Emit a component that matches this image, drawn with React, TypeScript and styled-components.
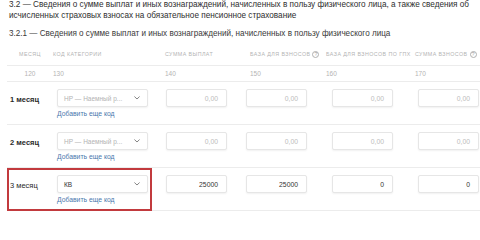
import React from "react";
import styled, { createGlobalStyle } from "styled-components";

const Global = createGlobalStyle`
  html, body { margin: 0; padding: 0; background: #fff; }
  body { width: 480px; height: 213px; overflow: hidden; font-family: "Liberation Sans", Arial, sans-serif; }
`;

const Page = styled.div`
  width: 480px;
  height: 213px;
  overflow: hidden;
  padding-left: 7px;
  box-sizing: border-box;
`;

const Title = styled.div`
  padding-left: 2px;
  font-size: 8.2px;
  line-height: 10.5px;
  color: #2e2e2e;
  font-weight: 500;
  white-space: nowrap;
`;

const SubTitle = styled.div`
  padding-left: 2px;
  margin-top: 7.5px;
  font-size: 8.15px;
  line-height: 10.5px;
  color: #3a3a3a;
  white-space: nowrap;
`;

const HeadGrid = styled.div<{ $h: number; $mt?: number }>`
  display: grid;
  grid-template-columns: 46px 112px 85px 76px 89px 1fr;
  align-items: center;
  height: ${(p) => p.$h}px;
  margin-top: ${(p) => p.$mt ?? 0}px;
  border-bottom: 1px solid #ececec;
  width: 480px;
`;

const HeadCell = styled.div<{ $center?: boolean }>`
  display: flex;
  align-items: center;
  gap: 2px;
  height: 8px;
  justify-content: ${(p) => (p.$center ? "center" : "flex-start")};
  font-size: 5.3px;
  line-height: 8px;
  letter-spacing: 0.45px;
  text-transform: uppercase;
  color: #b3b3b3;
  white-space: nowrap;
`;

const NumCell = styled.div<{ $center?: boolean }>`
  text-align: ${(p) => (p.$center ? "center" : "left")};
  font-size: 6.5px;
  color: #b4b4b4;
`;

const Help = styled.span`
  display: inline-flex;
  align-items: center;
  justify-content: center;
  width: 7px;
  height: 7px;
  border: 0.8px solid #b0b0b0;
  border-radius: 50%;
  font-size: 5px;
  letter-spacing: 0;
  line-height: 7px;
  color: #a0a0a0;
  box-sizing: border-box;
`;

const Row = styled.div`
  position: relative;
  display: grid;
  grid-template-columns: 50px 108px 80px 86px 86px 1fr;
  height: 42px;
  border-bottom: 1px solid #ececec;
  width: 480px;
  box-sizing: content-box;
`;

const MonthLabel = styled.div<{ $weight: number }>`
  padding: 0 0 0 3px;
  height: 18px;
  margin-top: 8px;
  display: flex;
  align-items: center;
  font-size: 7.5px;
  font-weight: ${(p) => p.$weight};
  color: #2a2a2a;
  white-space: nowrap;
`;

const CodeCell = styled.div`
  display: flex;
  flex-direction: column;
  padding-top: 7px;
`;

const Select = styled.div<{ $filled?: boolean }>`
  width: 91px;
  height: 18px;
  box-sizing: border-box;
  border: 1px solid #e6e6e6;
  border-radius: 2px;
  box-shadow: 0 1px 2px rgba(0, 0, 0, 0.06);
  background: #fff;
  display: flex;
  align-items: center;
  justify-content: space-between;
  padding: 0 7px 0 6px;
  font-size: 6.5px;
  color: ${(p) => (p.$filled ? "#333" : "#b3b3b3")};
  white-space: nowrap;
`;

const AddLink = styled.div`
  margin-top: 2px;
  font-size: 6.8px;
  line-height: 10px;
  color: #4a78ad;
  white-space: nowrap;
`;

const InputCell = styled.div`
  padding-top: 7px;
  padding-left: 1px;
`;

const Input = styled.div<{ $filled?: boolean }>`
  width: 61px;
  height: 18px;
  box-sizing: border-box;
  border: 1px solid #e6e6e6;
  border-radius: 2px;
  box-shadow: 0 1px 2px rgba(0, 0, 0, 0.06);
  background: #fff;
  display: flex;
  align-items: center;
  justify-content: flex-end;
  padding-right: 8px;
  font-size: 6.8px;
  color: ${(p) => (p.$filled ? "#333" : "#bcbcbc")};
`;

const Highlight = styled.div`
  position: absolute;
  left: 0;
  top: 0;
  width: 145px;
  height: 43px;
  border: 2px solid rgb(194, 58, 62);
  box-sizing: border-box;
  pointer-events: none;
`;

const Chevron = () => (
  <svg width="6" height="4" viewBox="0 0 6 4" fill="none">
    <path d="M0.7 0.8 L3 3 L5.3 0.8" stroke="#777" strokeWidth="0.9" strokeLinecap="round" strokeLinejoin="round" />
  </svg>
);

type RowData = {
  month: string;
  weight: number;
  code: string;
  filled: boolean;
  values: string[];
  highlight?: boolean;
};

const rows: RowData[] = [
  { month: "1 месяц", weight: 700, code: "НР — Наемный р...", filled: false, values: ["0,00", "0,00", "0,00", "0,00"] },
  { month: "2 месяц", weight: 600, code: "НР — Наемный р...", filled: false, values: ["0,00", "0,00", "0,00", "0,00"] },
  { month: "3 месяц", weight: 500, code: "КВ", filled: true, values: ["25000", "25000", "0", "0"], highlight: true },
];

export default function App() {
  return (
    <Page>
      <Global />
      <Title>
        3.2 — Сведения о сумме выплат и иных вознаграждений, начисленных в пользу физического лица, а также сведения об
        <br />
        исчисленных страховых взносах на обязательное пенсионное страхование
      </Title>
      <SubTitle>3.2.1 — Сведения о сумме выплат и иных вознаграждений, начисленных в пользу физического лица</SubTitle>
      <HeadGrid $h={22} $mt={4}>
        <HeadCell $center>Месяц</HeadCell>
        <HeadCell>Код категории</HeadCell>
        <HeadCell>Сумма выплат</HeadCell>
        <HeadCell>
          База для взносов <Help>?</Help>
        </HeadCell>
        <HeadCell>База для взносов по ГПХ</HeadCell>
        <HeadCell>
          Сумма взносов <Help>?</Help>
        </HeadCell>
      </HeadGrid>
      <HeadGrid $h={15}>
        <NumCell $center>120</NumCell>
        <NumCell>130</NumCell>
        <NumCell>140</NumCell>
        <NumCell>150</NumCell>
        <NumCell>160</NumCell>
        <NumCell>170</NumCell>
      </HeadGrid>
      {rows.map((r) => (
        <Row key={r.month}>
          <MonthLabel $weight={r.weight}>{r.month}</MonthLabel>
          <CodeCell>
            <Select $filled={r.filled}>
              <span>{r.code}</span>
              <Chevron />
            </Select>
            <AddLink>Добавить еще код</AddLink>
          </CodeCell>
          {r.values.map((v, i) => (
            <InputCell key={i}>
              <Input $filled={r.filled}>{v}</Input>
            </InputCell>
          ))}
          {r.highlight && <Highlight />}
        </Row>
      ))}
    </Page>
  );
}
